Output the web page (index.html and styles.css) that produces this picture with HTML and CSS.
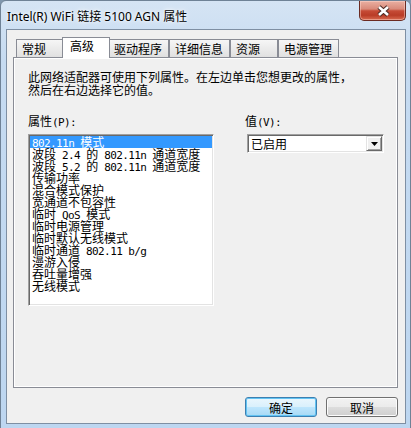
FILE: index.html
```html
<!DOCTYPE html>
<html lang="zh-CN">
<head>
    <meta charset="UTF-8">
    <title>Intel(R) WiFi 链接 5100 AGN 属性</title>
    <link rel="stylesheet" href="styles.css">
</head>
<body>
<div class="window">
    <div class="titlebar">
        <span class="title">Intel(R) WiFi 链接 5100 AGN 属性</span>
        <button class="close" aria-label="关闭">
            <svg width="47" height="20" viewBox="0 0 47 20">
                <path d="M19 6 L28 14 M28 6 L19 14" stroke="#4a2a24" stroke-width="4.6" fill="none"/>
                <path d="M19 6 L28 14 M28 6 L19 14" stroke="#fff" stroke-width="2.6" fill="none"/>
            </svg>
        </button>
    </div>

    <div class="client">
        <div class="tabs">
            <div class="tab">常规</div>
            <div class="tab active">高级</div>
            <div class="tab">驱动程序</div>
            <div class="tab">详细信息</div>
            <div class="tab">资源</div>
            <div class="tab">电源管理</div>
        </div>

        <div class="panel">
            <p class="desc">此网络适配器可使用下列属性。在左边单击您想更改的属性，<br>然后在右边选择它的值。</p>

            <div class="props">
                <div class="col">
                    <div class="label">属性<span class="a">(P):</span></div>
                    <ul class="listbox">
                        <li class="sel"><span class="a">802.11n </span>模式</li>
                        <li>波段<span class="a"> 2.4 </span>的<span class="a"> 802.11n </span>通道宽度</li>
                        <li>波段<span class="a"> 5.2 </span>的<span class="a"> 802.11n </span>通道宽度</li>
                        <li>传输功率</li>
                        <li>混合模式保护</li>
                        <li>宽通道不包容性</li>
                        <li>临时<span class="a"> QoS </span>模式</li>
                        <li>临时电源管理</li>
                        <li>临时默认无线模式</li>
                        <li>临时通道<span class="a"> 802.11 b/g</span></li>
                        <li>漫游入侵</li>
                        <li>吞吐量增强</li>
                        <li>无线模式</li>
                    </ul>
                </div>
                <div class="col">
                    <div class="label">值<span class="a">(V):</span></div>
                    <div class="combo">
                        <span class="combo-text">已启用</span>
                        <span class="drop">
                            <svg width="7" height="4" viewBox="0 0 7 4"><path d="M0 0H7L3.5 4Z" fill="#000"/></svg>
                        </span>
                    </div>
                </div>
            </div>
        </div>

        <div class="buttons">
            <button class="btn default">确定</button>
            <button class="btn">取消</button>
        </div>
    </div>
</div>
</body>
</html>
```

FILE: styles.css
```css
html, body {
    margin: 0;
}
body {
    width: 411px;
    height: 428px;
    overflow: hidden;
    background-color: #8097ae;
    font-family: "Noto Sans CJK SC", sans-serif;
    font-size: 12px;
    color: #000;
}

/* window frame */
.window {
    box-sizing: border-box;
    height: 430px;
    border: 1px solid #6f8296;
    border-radius: 6px 6px 0 0;
    padding: 0 4px 0 5px;
    background: linear-gradient(#d5e4f4, #c6dbf1 60px, #bdd6f0);
}
.titlebar {
    display: flex;
    justify-content: space-between;
    align-items: flex-start;
    height: 28px;
}
.title {
    margin: 8px 0 0 1px;
    line-height: 16px;
    font-family: "Noto Sans", "Noto Sans CJK SC", sans-serif;
    font-size: 12px;
    text-shadow: 0 0 6px #fff, 0 0 3px #fff;
}
.close {
    box-sizing: border-box;
    width: 47px;
    height: 20px;
    padding: 0;
    border: 1px solid #6b2b22;
    border-top: 0;
    border-radius: 0 0 5px 5px;
    background: linear-gradient(#eab0a2 0%, #d98a7a 42%, #c64b36 52%, #b93c27 75%, #d86a50 100%);
    box-shadow: inset 0 0 0 1px rgba(255, 220, 210, 0.45);
}
.close svg {
    display: block;
}

/* dialog body */
.client {
    box-sizing: border-box;
    height: 395px;
    border: 1px solid #7e8fa3;
    background-color: #f0f0f0;
    padding: 7px 7px 0 6px;
}

.tabs {
    display: flex;
    align-items: flex-end;
    height: 20px;
    padding-left: 3px;
    position: relative;
    z-index: 1;
}
.tab {
    box-sizing: border-box;
    min-width: 48px;
    height: 18px;
    padding: 0 6px 0 5px;
    border: 1px solid #898c95;
    border-bottom: 0;
    background: linear-gradient(#f6f6f6, #e0e0e0);
    line-height: 17px;
    white-space: nowrap;
}
.tab.active {
    position: relative;
    z-index: 2;
    height: 21px;
    margin: 0 -2px -1px;
    padding: 0 8px 0 7px;
    background: #fff;
    line-height: 16px;
}

.panel {
    box-sizing: border-box;
    height: 331px;
    border: 1px solid #898c95;
    background-color: #f0f0f0;
    box-shadow: inset 0 0 0 1px #fff;
    padding: 12px 0 0 14px;
}
.desc {
    margin: 0;
    line-height: 13px;
    white-space: nowrap;
}
.props {
    display: grid;
    grid-template-columns: 186px 139px;
    column-gap: 31px;
    margin-top: 19px;
}
.label {
    line-height: 12px;
    margin-bottom: 5px;
}
.a {
    font-family: "DejaVu Sans Mono", monospace;
    font-size: 11px;
    letter-spacing: -0.6px;
}

.listbox {
    box-sizing: border-box;
    width: 186px;
    height: 172px;
    margin: 0;
    padding: 1px;
    list-style: none;
    background-color: #fff;
    border: 1px solid;
    border-color: #a0a0a0 #fff #fff #a0a0a0;
    box-shadow: inset 1px 1px 0 #696969, inset -1px -1px 0 #e3e3e3;
}
.listbox li {
    height: 12px;
    line-height: 12px;
    padding-left: 2px;
    white-space: pre;
}
.listbox li.sel {
    background-color: #3399ff;
    color: #fff;
}

.combo {
    box-sizing: border-box;
    display: flex;
    justify-content: space-between;
    width: 137px;
    height: 19px;
    margin-left: 2px;
    padding: 1px;
    background-color: #fff;
    border: 1px solid;
    border-color: #a0a0a0 #fff #fff #a0a0a0;
    box-shadow: inset 1px 1px 0 #696969, inset -1px -1px 0 #e3e3e3;
}
.combo-text {
    padding-left: 2px;
    line-height: 15px;
}
.drop {
    box-sizing: border-box;
    display: flex;
    align-items: center;
    justify-content: center;
    width: 16px;
    height: 15px;
    background-color: #f0f0f0;
    border: 1px solid;
    border-color: #e3e3e3 #696969 #696969 #e3e3e3;
    box-shadow: inset 1px 1px 0 #fff, inset -1px -1px 0 #a0a0a0;
}
.drop svg {
    display: block;
}

.buttons {
    display: flex;
    justify-content: flex-end;
    gap: 9px;
    margin-top: 9px;
}
.btn {
    box-sizing: border-box;
    width: 72px;
    height: 20px;
    padding: 0;
    border: 1px solid #707070;
    border-radius: 3px;
    background: linear-gradient(#f2f2f2 0%, #ebebeb 50%, #dddddd 50%, #cfcfcf 100%);
    box-shadow: inset 0 0 0 1px #fcfcfc;
    font-family: "Noto Sans CJK SC", sans-serif;
    font-size: 12px;
    line-height: 17px;
    color: #000;
}
.btn.default {
    border-color: #3c7fb1;
    background: linear-gradient(#eaf6fd 0%, #d9f0fc 50%, #bee6fd 50%, #a7d9f5 100%);
    box-shadow: inset 0 0 0 1px #62c3f2;
}
```
